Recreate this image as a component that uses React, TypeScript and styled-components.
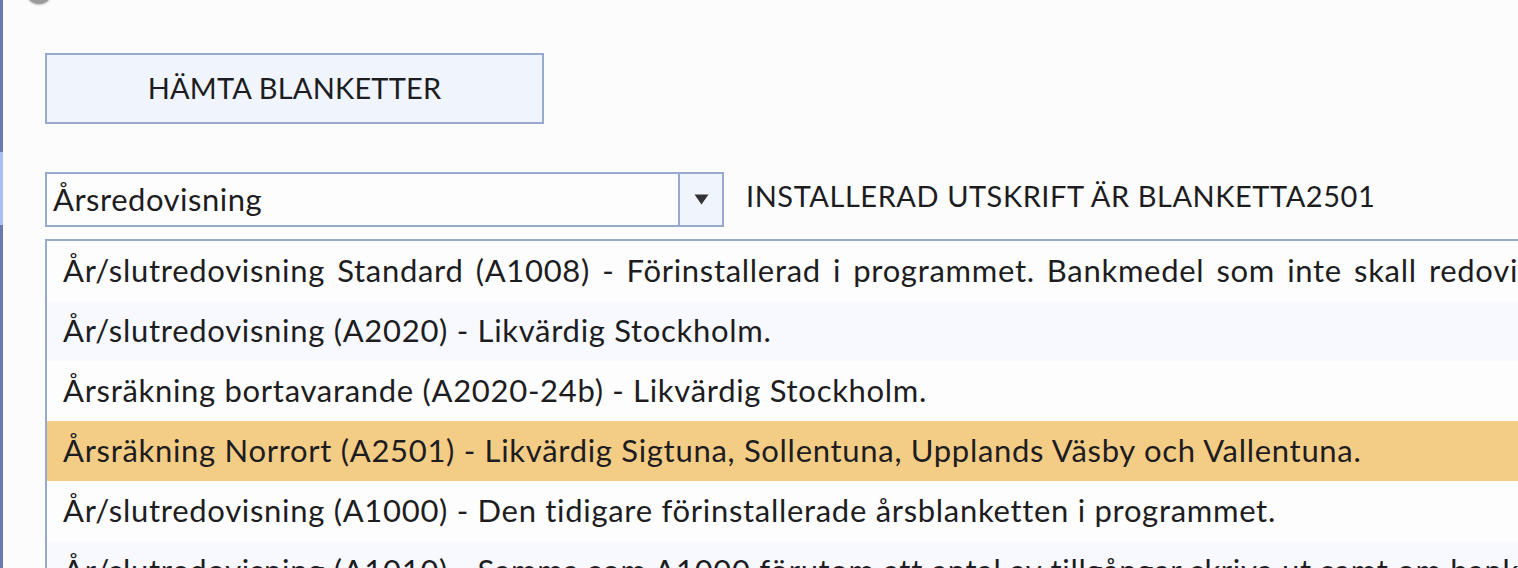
import React from "react";
import styled, { createGlobalStyle } from "styled-components";

const Global = createGlobalStyle`
  html, body { margin: 0; padding: 0; background: #fcfcfd; }
  body { font-family: Lato, "Noto Sans", sans-serif; color: #1d1d1f; overflow: hidden; }
`;

const Page = styled.div`
  position: relative;
  display: flex;
  width: 1518px;
  height: 568px;
  overflow: hidden;
  background: #fcfcfd;
`;

const SideBar = styled.div`
  flex: 0 0 3px;
  display: flex;
  flex-direction: column;
  background: #6a7aae;
`;

const SideHighlight = styled.div`
  margin-top: 152px;
  height: 73px;
  background: #a9c1f7;
`;

const TopKnob = styled.div`
  position: absolute;
  left: 26px;
  top: -22px;
  width: 26px;
  height: 26px;
  border-radius: 50%;
  background: #9a9a9a;
  box-shadow: 0 1px 2px rgba(0, 0, 0, 0.25);
`;

const Content = styled.div`
  flex: 1;
  min-width: 0;
  display: flex;
  flex-direction: column;
  padding: 53px 0 0 42px;
  & > * { flex-shrink: 0; }
`;

const FetchButton = styled.button`
  box-sizing: border-box;
  width: 499px;
  height: 71px;
  border: 2px solid #97a9cc;
  background: #eff4fd;
  font-family: inherit;
  font-size: 29px;
  color: #1d1d1f;
  letter-spacing: 0.2px;
  padding: 0 0 2px;
  cursor: pointer;
`;

const FilterRow = styled.div`
  display: flex;
  align-items: center;
  gap: 22px;
  margin-top: 48px;
`;

const Combo = styled.div`
  box-sizing: border-box;
  width: 679px;
  height: 55px;
  border: 2px solid #97a9cc;
  background: #fdfdfd;
  display: flex;
`;

const ComboText = styled.div`
  flex: 1;
  display: flex;
  align-items: center;
  padding-left: 6px;
  font-size: 31px;
  letter-spacing: 0.5px;
  padding-bottom: 2px;
`;

const ComboButton = styled.div`
  flex: 0 0 42px;
  border-left: 2px solid #97a9cc;
  background: #eff4fd;
  display: flex;
  align-items: center;
  justify-content: center;
  padding-bottom: 1px;
`;

const Arrow = styled.svg`
  display: block;
  width: 15px;
  height: 11px;
`;

const Label = styled.div`
  font-size: 29px;
  letter-spacing: 0.55px;
  padding-bottom: 8px;
`;

const List = styled.div`
  margin-top: 12px;
  border-top: 2px solid #97a9cc;
  border-left: 2px solid #97a9cc;
  display: flex;
  flex-direction: column;
`;

const Row = styled.div<{ $alt?: boolean; $selected?: boolean; $spread?: boolean }>`
  height: 60px;
  flex: 0 0 60px;
  display: flex;
  align-items: center;
  padding-left: 16px;
  padding-bottom: 3px;
  box-sizing: border-box;
  white-space: nowrap;
  overflow: hidden;
  font-size: 31px;
  letter-spacing: 0.7px;
  color: #1d1d1f;
  word-spacing: ${(p) => (p.$spread ? "3.5px" : "0")};
  background: ${(p) => (p.$selected ? "#f3cc86" : p.$alt ? "#f7f9fe" : "#fdfdfd")};
`;

const rows = [
  {
    text: "År/slutredovisning Standard (A1008) - Förinstallerad i programmet. Bankmedel som inte skall redovisas i årsräkningen kan exkluderas.",
    spread: true,
  },
  { text: "År/slutredovisning (A2020) - Likvärdig Stockholm." },
  { text: "Årsräkning bortavarande (A2020-24b) - Likvärdig Stockholm." },
  {
    text: "Årsräkning Norrort (A2501) - Likvärdig Sigtuna, Sollentuna, Upplands Väsby och Vallentuna.",
    selected: true,
  },
  { text: "År/slutredovisning (A1000) - Den tidigare förinstallerade årsblanketten i programmet." },
  {
    text: "År/slutredovisning (A1010) - Samma som A1000 förutom att antal av tillgångar skriva ut samt om bankmedel ska redovisas.",
  },
];

export default function App() {
  return (
    <>
      <Global />
      <Page>
        <TopKnob />
        <SideBar>
          <SideHighlight />
        </SideBar>
        <Content>
          <FetchButton>HÄMTA BLANKETTER</FetchButton>
          <FilterRow>
            <Combo>
              <ComboText>Årsredovisning</ComboText>
              <ComboButton>
                <Arrow viewBox="0 0 15 11">
                  <path d="M0.5 0.5 H14.5 L7.5 10.5 Z" fill="#333" />
                </Arrow>
              </ComboButton>
            </Combo>
            <Label>INSTALLERAD UTSKRIFT ÄR BLANKETTA2501</Label>
          </FilterRow>
          <List>
            {rows.map((r, i) => (
              <Row key={i} $alt={i % 2 === 1} $selected={r.selected} $spread={r.spread}>
                {r.text}
              </Row>
            ))}
          </List>
        </Content>
      </Page>
    </>
  );
}
